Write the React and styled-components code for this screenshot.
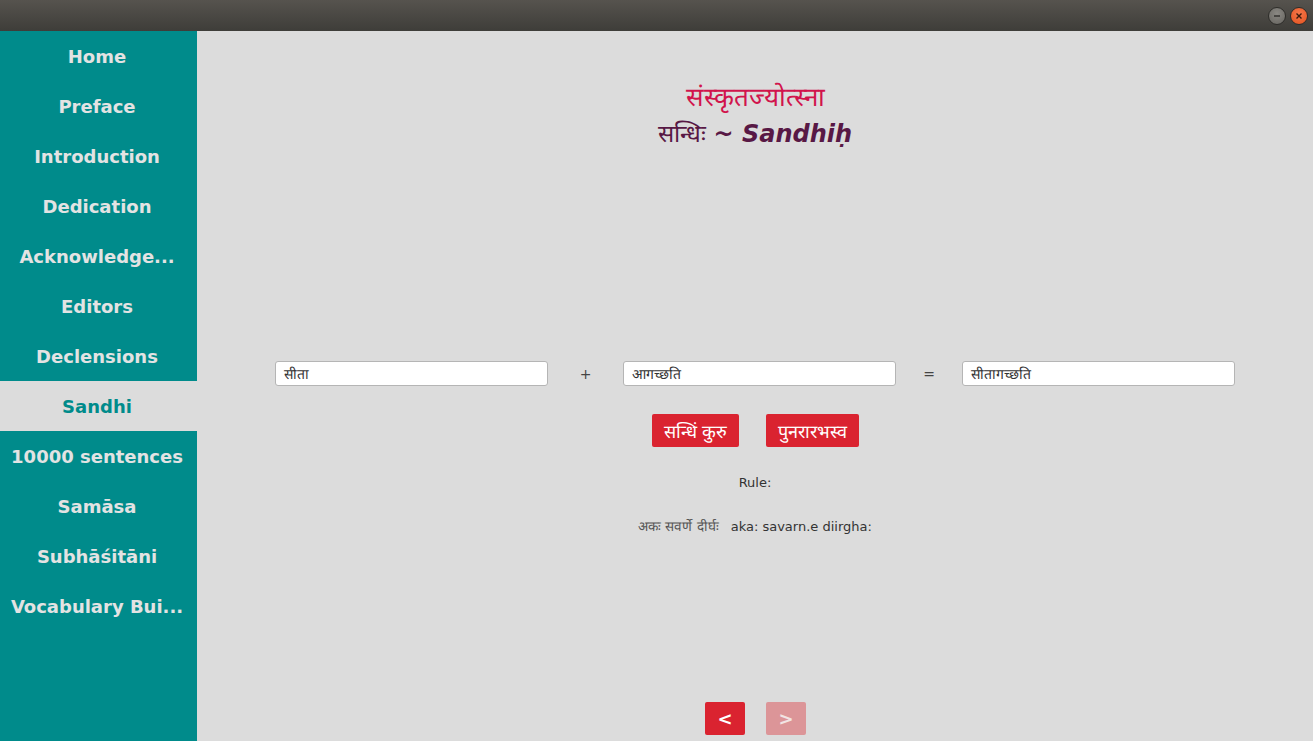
import styled, { createGlobalStyle } from "styled-components";

const GlobalStyle = createGlobalStyle`
  html, body { margin: 0; padding: 0; }
  body { font-family: "DejaVu Sans", sans-serif; background: #dcdcdc; overflow: hidden; }
`;

const Window = styled.div`
  width: 1313px;
  height: 741px;
  display: flex;
  flex-direction: column;
`;

const TitleBar = styled.div`
  height: 31px;
  flex-shrink: 0;
  background: linear-gradient(#56534e, #3e3d39);
  display: flex;
  justify-content: flex-end;
  align-items: center;
  gap: 4px;
  padding-right: 5px;
  box-sizing: border-box;
`;

const WinBtn = styled.div`
  width: 16px;
  height: 16px;
  border-radius: 50%;
  background: ${(p) => (p.$close ? "radial-gradient(circle at 50% 35%, #f5774a, #e3521f)" : "radial-gradient(circle at 50% 35%, #8a8883, #66645f)")};
  border: 1px solid #2e2d2a;
  display: flex;
  align-items: center;
  justify-content: center;
`;

const Body = styled.div`
  flex: 1;
  display: flex;
  min-height: 0;
`;

const Sidebar = styled.nav`
  width: 197px;
  flex-shrink: 0;
  background: #008b8b;
  display: flex;
  flex-direction: column;
`;

const NavItem = styled.div`
  height: 50px;
  display: flex;
  align-items: center;
  justify-content: center;
  padding-right: 3px;
  font-size: 18px;
  font-weight: bold;
  color: ${(p) => (p.$active ? "#008b8b" : "#e3e3e3")};
  background: ${(p) => (p.$active ? "#dcdcdc" : "transparent")};
  white-space: nowrap;
`;

const Main = styled.main`
  flex: 1;
  display: flex;
  flex-direction: column;
  align-items: center;
  padding-top: 48px;
`;

const Title = styled.div`
  font-size: 26px;
  line-height: 36px;
  color: #d1144c;
`;

const SubTitle = styled.div`
  font-size: 24px;
  line-height: 36px;
  margin-top: 1px;
  color: #581845;
`;

const Latin = styled.span`
  font-weight: bold;
  font-style: italic;
`;

const InputRow = styled.div`
  display: flex;
  align-items: center;
  margin-top: 209px;
`;

const Field = styled.div`
  width: 273px;
  height: 25px;
  box-sizing: border-box;
  background: #fff;
  border: 1px solid #b5b5b5;
  border-radius: 3px;
  display: flex;
  align-items: center;
  padding-left: 8px;
  font-size: 14px;
  color: #333;
`;

const Operator = styled.div`
  width: ${(p) => p.$w}px;
  text-align: center;
  font-size: 14px;
  color: #444;
`;

const ButtonRow = styled.div`
  display: flex;
  gap: 27px;
  margin-top: 28px;
  margin-left: 1px;
`;

const RedButton = styled.button`
  height: 33px;
  padding: 0 12px;
  border: none;
  border-radius: 2px;
  background: #da2330;
  color: #fff;
  font-family: "DejaVu Sans", sans-serif;
  font-size: 18px;
`;

const RuleLabel = styled.div`
  margin-top: 28px;
  font-size: 13px;
  line-height: 16px;
  color: #333;
`;

const RuleLine = styled.div`
  margin-top: 27px;
  line-height: 16px;
  display: flex;
  gap: 12px;
  align-items: baseline;
`;

const RuleDeva = styled.span`
  font-size: 13.5px;
  color: #555;
`;

const RuleLatin = styled.span`
  font-size: 13px;
  color: #333;
`;

const Pager = styled.div`
  margin-top: auto;
  margin-bottom: 6px;
  margin-left: 1px;
  display: flex;
  gap: 21px;
`;

const PageButton = styled.div`
  width: 40px;
  height: 33px;
  border-radius: 2px;
  background: ${(p) => (p.$disabled ? "#dc9598" : "#da2330")};
  color: ${(p) => (p.$disabled ? "#f2e4e4" : "#fff")};
  display: flex;
  align-items: center;
  justify-content: center;
  font-size: 18px;
  font-weight: bold;
`;

const items = [
  "Home",
  "Preface",
  "Introduction",
  "Dedication",
  "Acknowledge...",
  "Editors",
  "Declensions",
  "Sandhi",
  "10000 sentences",
  "Samāsa",
  "Subhāśitāni",
  "Vocabulary Bui...",
];

export default function App() {
  return (
    <Window>
      <GlobalStyle />
      <TitleBar>
        <WinBtn>
          <svg width="8" height="8" viewBox="0 0 8 8">
            <path d="M1 4h6" stroke="#2e2d2a" strokeWidth="1.4" />
          </svg>
        </WinBtn>
        <WinBtn $close>
          <svg width="8" height="8" viewBox="0 0 8 8">
            <path d="M1.5 1.5l5 5M6.5 1.5l-5 5" stroke="#3a1a0c" strokeWidth="1.4" />
          </svg>
        </WinBtn>
      </TitleBar>
      <Body>
        <Sidebar>
          {items.map((it) => (
            <NavItem key={it} $active={it === "Sandhi"}>
              {it}
            </NavItem>
          ))}
        </Sidebar>
        <Main>
          <Title>संस्कृतज्योत्स्ना</Title>
          <SubTitle>
            सन्धिः <Latin>~ Sandhiḥ</Latin>
          </SubTitle>
          <InputRow>
            <Field>सीता</Field>
            <Operator $w={75}>+</Operator>
            <Field>आगच्छति</Field>
            <Operator $w={66}>=</Operator>
            <Field>सीतागच्छति</Field>
          </InputRow>
          <ButtonRow>
            <RedButton>सन्धिं कुरु</RedButton>
            <RedButton>पुनरारभस्व</RedButton>
          </ButtonRow>
          <RuleLabel>Rule:</RuleLabel>
          <RuleLine>
            <RuleDeva>अकः सवर्णे दीर्घः</RuleDeva>
            <RuleLatin>aka: savarn.e diirgha:</RuleLatin>
          </RuleLine>
          <Pager>
            <PageButton>&lt;</PageButton>
            <PageButton $disabled>&gt;</PageButton>
          </Pager>
        </Main>
      </Body>
    </Window>
  );
}
